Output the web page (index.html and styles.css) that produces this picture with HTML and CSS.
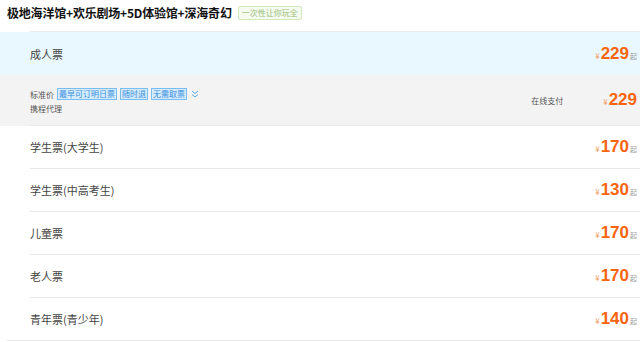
FILE: index.html
```html
<!DOCTYPE html>
<html lang="zh-CN">
<head>
<meta charset="utf-8">
<link rel="stylesheet" href="styles.css">
</head>
<body>
<div class="header">
  <h1 class="title">极地海洋馆+欢乐剧场+5D体验馆+深海奇幻</h1>
  <span class="badge">一次性让你玩全</span>
</div>
<div class="list">
  <div class="topline"></div>
  <div class="row row-active">
    <div class="inner noborder">
      <span class="name">成人票</span>
      <span class="price"><span class="yen">¥</span><span class="num">229</span><span class="qi">起</span></span>
    </div>
  </div>
  <div class="row row-detail">
    <div class="inner detail">
      <div class="dleft">
        <div class="dline">
          <span class="small">标准价</span>
          <span class="tag">最早可订明日票</span>
          <span class="tag">随时退</span>
          <span class="tag">无需取票</span>
          <svg class="chev" width="8" height="8" viewBox="0 0 8 8"><path d="M1 1 L4 3.5 L7 1 M1 4.5 L4 7 L7 4.5" fill="none" stroke="#5aa9ec" stroke-width="1"/></svg>
        </div>
        <div class="dline"><span class="small">携程代理</span></div>
      </div>
      <div class="dright">
        <span class="small pay">在线支付</span>
        <span class="price"><span class="yen">¥</span><span class="num">229</span></span>
      </div>
    </div>
  </div>
  <div class="row">
    <div class="inner">
      <span class="name">学生票(大学生)</span>
      <span class="price"><span class="yen">¥</span><span class="num">170</span><span class="qi">起</span></span>
    </div>
  </div>
  <div class="row">
    <div class="inner">
      <span class="name">学生票(中高考生)</span>
      <span class="price"><span class="yen">¥</span><span class="num">130</span><span class="qi">起</span></span>
    </div>
  </div>
  <div class="row">
    <div class="inner">
      <span class="name">儿童票</span>
      <span class="price"><span class="yen">¥</span><span class="num">170</span><span class="qi">起</span></span>
    </div>
  </div>
  <div class="row">
    <div class="inner">
      <span class="name">老人票</span>
      <span class="price"><span class="yen">¥</span><span class="num">170</span><span class="qi">起</span></span>
    </div>
  </div>
  <div class="row row-last">
    <div class="inner noborder">
      <span class="name">青年票(青少年)</span>
      <span class="price"><span class="yen">¥</span><span class="num">140</span><span class="qi">起</span></span>
    </div>
  </div>
</div>
</body>
</html>
```
FILE: styles.css
```css
* { box-sizing: border-box; }
body {
  margin: 0;
  background: #fff;
  font-family: "Noto Sans CJK SC", "Liberation Sans", sans-serif;
  color: #333;
}
.header {
  height: 25px;
  margin-bottom: 6px;
  padding-left: 7px;
  display: flex;
  align-items: center;
  gap: 6px;
}
.title {
  margin: 0;
  font-size: 12px;
  font-weight: bold;
  color: #111;
  letter-spacing: -0.2px;
}
.badge {
  font-size: 8px;
  line-height: 12px;
  padding: 0 3px;
  color: #9cc07a;
  background: #f5fbef;
  border: 1px solid #d3e8bd;
  border-radius: 2px;
}
.topline {
  margin-left: 30px;
  height: 1px;
  background: #ececec;
}
.row { background: #fff; }
.row-active { background: #e9f7fe; }
.row-detail { background: #f3f3f3; }
.inner {
  margin-left: 30px;
  height: 43px;
  border-bottom: 1px solid #e8e8e8;
  display: flex;
  align-items: center;
  justify-content: space-between;
  padding-right: 3px;
}
.noborder { border-bottom: none; }
.row-active .inner { height: 43px; }
.detail { height: 51px; }
.row-last { margin-left: 7px; border-bottom: 1px solid #e8e8e8; }
.row-last .inner { margin-left: 23px; height: 42px; }
.name {
  font-size: 11px;
  color: #444;
}
.price {
  display: flex;
  align-items: baseline;
  color: #f8650e;
}
.yen {
  font-size: 8px;
  color: #f39a5c;
  margin-right: 1px;
}
.num {
  font-family: "Liberation Sans", Arial, sans-serif;
  font-weight: bold;
  font-size: 17px;
  line-height: 20px;
}
.qi {
  font-size: 7px;
  color: #999;
  margin-left: 1px;
}
.dleft {
  display: flex;
  flex-direction: column;
  gap: 2px;
  padding-top: 2px;
}
.dline {
  display: flex;
  align-items: center;
  gap: 3px;
  height: 12px;
}
.small {
  font-size: 8px;
  color: #555;
}
.dline .small { margin-right: 0; }
.tag {
  font-size: 8px;
  line-height: 10px;
  padding: 0 1px;
  color: #3a8fe0;
  background: #d4ebfb;
  border: 1px solid #7bbdf0;
}
.chev { margin-left: 1px; }
.dright {
  display: flex;
  align-items: center;
}
.pay { margin-right: 40px; }
```
